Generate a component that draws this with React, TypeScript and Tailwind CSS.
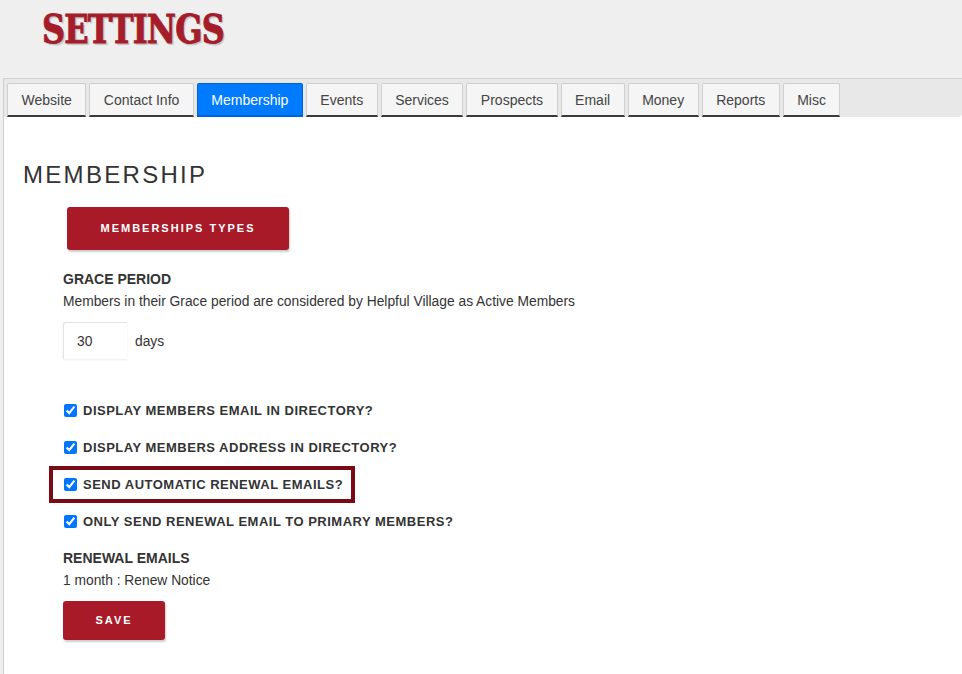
import { useState } from 'react';

const tabs = [
  'Website',
  'Contact Info',
  'Membership',
  'Events',
  'Services',
  'Prospects',
  'Email',
  'Money',
  'Reports',
  'Misc',
];

const options = [
  { key: 'email', label: 'Display members email in directory?' },
  { key: 'address', label: 'Display members address in directory?' },
  { key: 'renewal', label: 'Send automatic renewal emails?', marked: true },
  { key: 'primary', label: 'Only send renewal email to primary members?' },
];

export default function App() {
  const [active, setActive] = useState('Membership');
  const [grace, setGrace] = useState('30');
  const [checked, setChecked] = useState<Record<string, boolean>>({
    email: true,
    address: true,
    renewal: true,
    primary: true,
  });

  return (
    <div className="min-h-screen bg-[#efefef] font-['Liberation_Sans',Arial,sans-serif] text-[#333]">
      <div className="h-[78px] pl-[42px] pt-[7px]">
        <h1 className="inline-block origin-left scale-x-[0.82] font-['DejaVu_Serif',serif] text-[39px] font-bold leading-[44px] tracking-[-1px] text-[#a51c2a] [-webkit-text-stroke:1px_#a51c2a] [text-shadow:2px_2px_1px_#c4c4c4]">
          SETTINGS
        </h1>
      </div>

      <div className="ml-[3px] min-h-[596px] border-l border-t border-[#cfcfcf] bg-white">
        <div className="flex gap-[3px] rounded-br-[4px] bg-[#e8e8e8] pl-[3px] pt-[4px]">
          {tabs.map((t) => (
            <button
              key={t}
              onClick={() => setActive(t)}
              className={
                t === active
                  ? 'h-[34px] rounded-t-[2px] border border-b-2 border-[#0062d6] bg-[#007bff] px-[13.5px] pt-[1px] text-[14px] text-white'
                  : 'h-[34px] rounded-t-[2px] border border-b-2 border-[#cfcfcf] border-b-[#3a3a3a] bg-[#f5f5f5] px-[13.5px] pt-[1px] text-[14px] text-[#444]'
              }
            >
              {t}
            </button>
          ))}
        </div>

        <div className="pl-[19px] pt-[46px]">
          <h2 className="text-[24px] leading-[24px] tracking-[2.3px] text-[#333]">MEMBERSHIP</h2>

          <div className="ml-[40px]">
            <button className="ml-[4px] mt-[20px] h-[43px] w-[222px] rounded-[3px] bg-[#a81a28] text-[11px] font-bold tracking-[2px] text-white shadow-[1px_2px_2px_rgba(0,0,0,0.2)]">
              MEMBERSHIPS TYPES
            </button>

            <div className="mt-[20px] text-[14px] font-bold leading-[18px]">GRACE PERIOD</div>
            <p className="mt-[5px] text-[13.8px] leading-[18px]">
              Members in their Grace period are considered by Helpful Village as Active Members
            </p>

            <div className="mt-[11px] flex items-center gap-[8px]">
              <input
                value={grace}
                onChange={(e) => setGrace(e.target.value)}
                className="h-[37px] w-[64px] rounded-tl-[3px] border-l border-t border-[#e4e4e4] pl-[13px] text-[13.8px] text-[#333] shadow-[0_1px_2px_rgba(0,0,0,0.08)] outline-none"
              />
              <span className="mt-[3px] text-[13.8px]">days</span>
            </div>

            <div className="mt-[33px]">
              {options.map((o) => (
                <label key={o.key} className="relative flex h-[37px] items-center gap-[6px]">
                  <input
                    type="checkbox"
                    checked={checked[o.key]}
                    onChange={(e) => setChecked({ ...checked, [o.key]: e.target.checked })}
                    className="ml-[1px] h-[13px] w-[13px] accent-[#0075ff]"
                  />
                  <span className="text-[13px] font-bold uppercase tracking-[0.5px] text-[#333]">
                    {o.label}
                  </span>
                  {o.marked && (
                    <span className="pointer-events-none absolute left-[-14px] top-0 h-[37px] w-[306px] border-[4px] border-[#7b0a17]" />
                  )}
                </label>
              ))}
            </div>

            <div className="mt-[9px] text-[14px] font-bold leading-[18px]">RENEWAL EMAILS</div>
            <div className="mt-[5px] text-[13.8px] leading-[18px]">1 month : Renew Notice</div>

            <button className="mt-[11px] h-[39px] w-[102px] rounded-[3px] bg-[#a81a28] text-[11px] font-bold tracking-[2px] text-white shadow-[1px_2px_2px_rgba(0,0,0,0.2)]">
              SAVE
            </button>
          </div>
        </div>
      </div>
    </div>
  );
}
